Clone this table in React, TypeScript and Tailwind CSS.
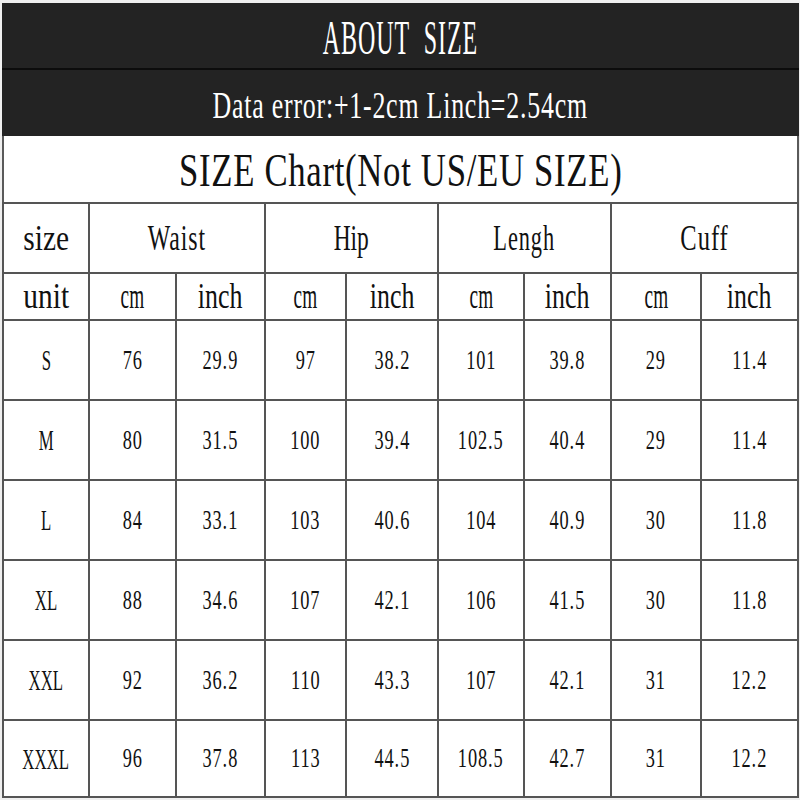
import React from "react";

const sizes = [
  ["S", "76", "29.9", "97", "38.2", "101", "39.8", "29", "11.4"],
  ["M", "80", "31.5", "100", "39.4", "102.5", "40.4", "29", "11.4"],
  ["L", "84", "33.1", "103", "40.6", "104", "40.9", "30", "11.8"],
  ["XL", "88", "34.6", "107", "42.1", "106", "41.5", "30", "11.8"],
  ["XXL", "92", "36.2", "110", "43.3", "107", "42.1", "31", "12.2"],
  ["XXXL", "96", "37.8", "113", "44.5", "108.5", "42.7", "31", "12.2"],
];

function Cell({ children, className = "" }: { children: React.ReactNode; className?: string }) {
  return (
    <div className={"bg-white flex items-center justify-center overflow-hidden " + className}>
      {children}
    </div>
  );
}

export default function App() {
  return (
    <div
      className="w-[800px] h-[800px] bg-[#efefef] pt-[3px] pl-[2px] pr-px overflow-hidden text-[#111]"
      style={{ fontFamily: '"Liberation Serif", "Times New Roman", serif' }}
    >
      <div className="h-[67px] bg-[#232323] flex items-center justify-center border-b-2 border-[#0c0c0c]">
        <span className="inline-block text-white text-[48px] leading-none tracking-[0.04em] scale-x-[0.5] whitespace-pre translate-y-[2px]">
          ABOUT  SIZE
        </span>
      </div>
      <div className="h-[66px] bg-[#232323] flex items-center justify-center">
        <span className="inline-block text-white text-[37px] leading-none tracking-[0.03em] scale-x-[0.7] whitespace-nowrap translate-y-[2px]">
          Data error:+1-2cm Linch=2.54cm
        </span>
      </div>
      <div className="h-[66px] bg-white flex items-center justify-center border-x-2 border-[#5a5a5a]">
        <span className="inline-block text-[46px] leading-none tracking-[0.02em] scale-x-[0.755] whitespace-nowrap translate-y-[2px]">
          SIZE Chart(Not US/EU SIZE)
        </span>
      </div>
      <div className="bg-[#555] p-[2px] grid gap-[2px] grid-cols-[84px_85px_87px_79px_90px_84px_85px_88px_95px] grid-rows-[68px_45px_78px_78px_78px_78px_78px_75px]">
        <Cell>
          <span className="inline-block text-[35px] leading-none scale-x-[0.84]">size</span>
        </Cell>
        <Cell className="col-span-2">
          <span className="inline-block text-[35px] leading-none tracking-[0.04em] scale-x-[0.68]">Waist</span>
        </Cell>
        <Cell className="col-span-2">
          <span className="inline-block text-[35px] leading-none scale-x-[0.67]">Hip</span>
        </Cell>
        <Cell className="col-span-2">
          <span className="inline-block text-[35px] leading-none tracking-[0.04em] scale-x-[0.64]">Lengh</span>
        </Cell>
        <Cell className="col-span-2">
          <span className="inline-block text-[35px] leading-none tracking-[0.04em] scale-x-[0.7]">Cuff</span>
        </Cell>

        <Cell>
          <span className="inline-block text-[35px] leading-none scale-x-[0.84]">unit</span>
        </Cell>
        {[0, 1, 2, 3].map((i) => (
          <React.Fragment key={i}>
            <Cell>
              <span className="inline-block text-[35px] leading-none scale-x-[0.55]">cm</span>
            </Cell>
            <Cell>
              <span className="inline-block text-[35px] leading-none scale-x-[0.74]">inch</span>
            </Cell>
          </React.Fragment>
        ))}

        {sizes.map((row) =>
          row.map((v, j) => (
            <Cell key={row[0] + j}>
              {j === 0 ? (
                <span className="inline-block text-[30px] leading-none scale-x-[0.56]">{v}</span>
              ) : (
                <span className="inline-block text-[27px] leading-none tracking-[0.05em] scale-x-[0.68]">{v}</span>
              )}
            </Cell>
          ))
        )}
      </div>
    </div>
  );
}
